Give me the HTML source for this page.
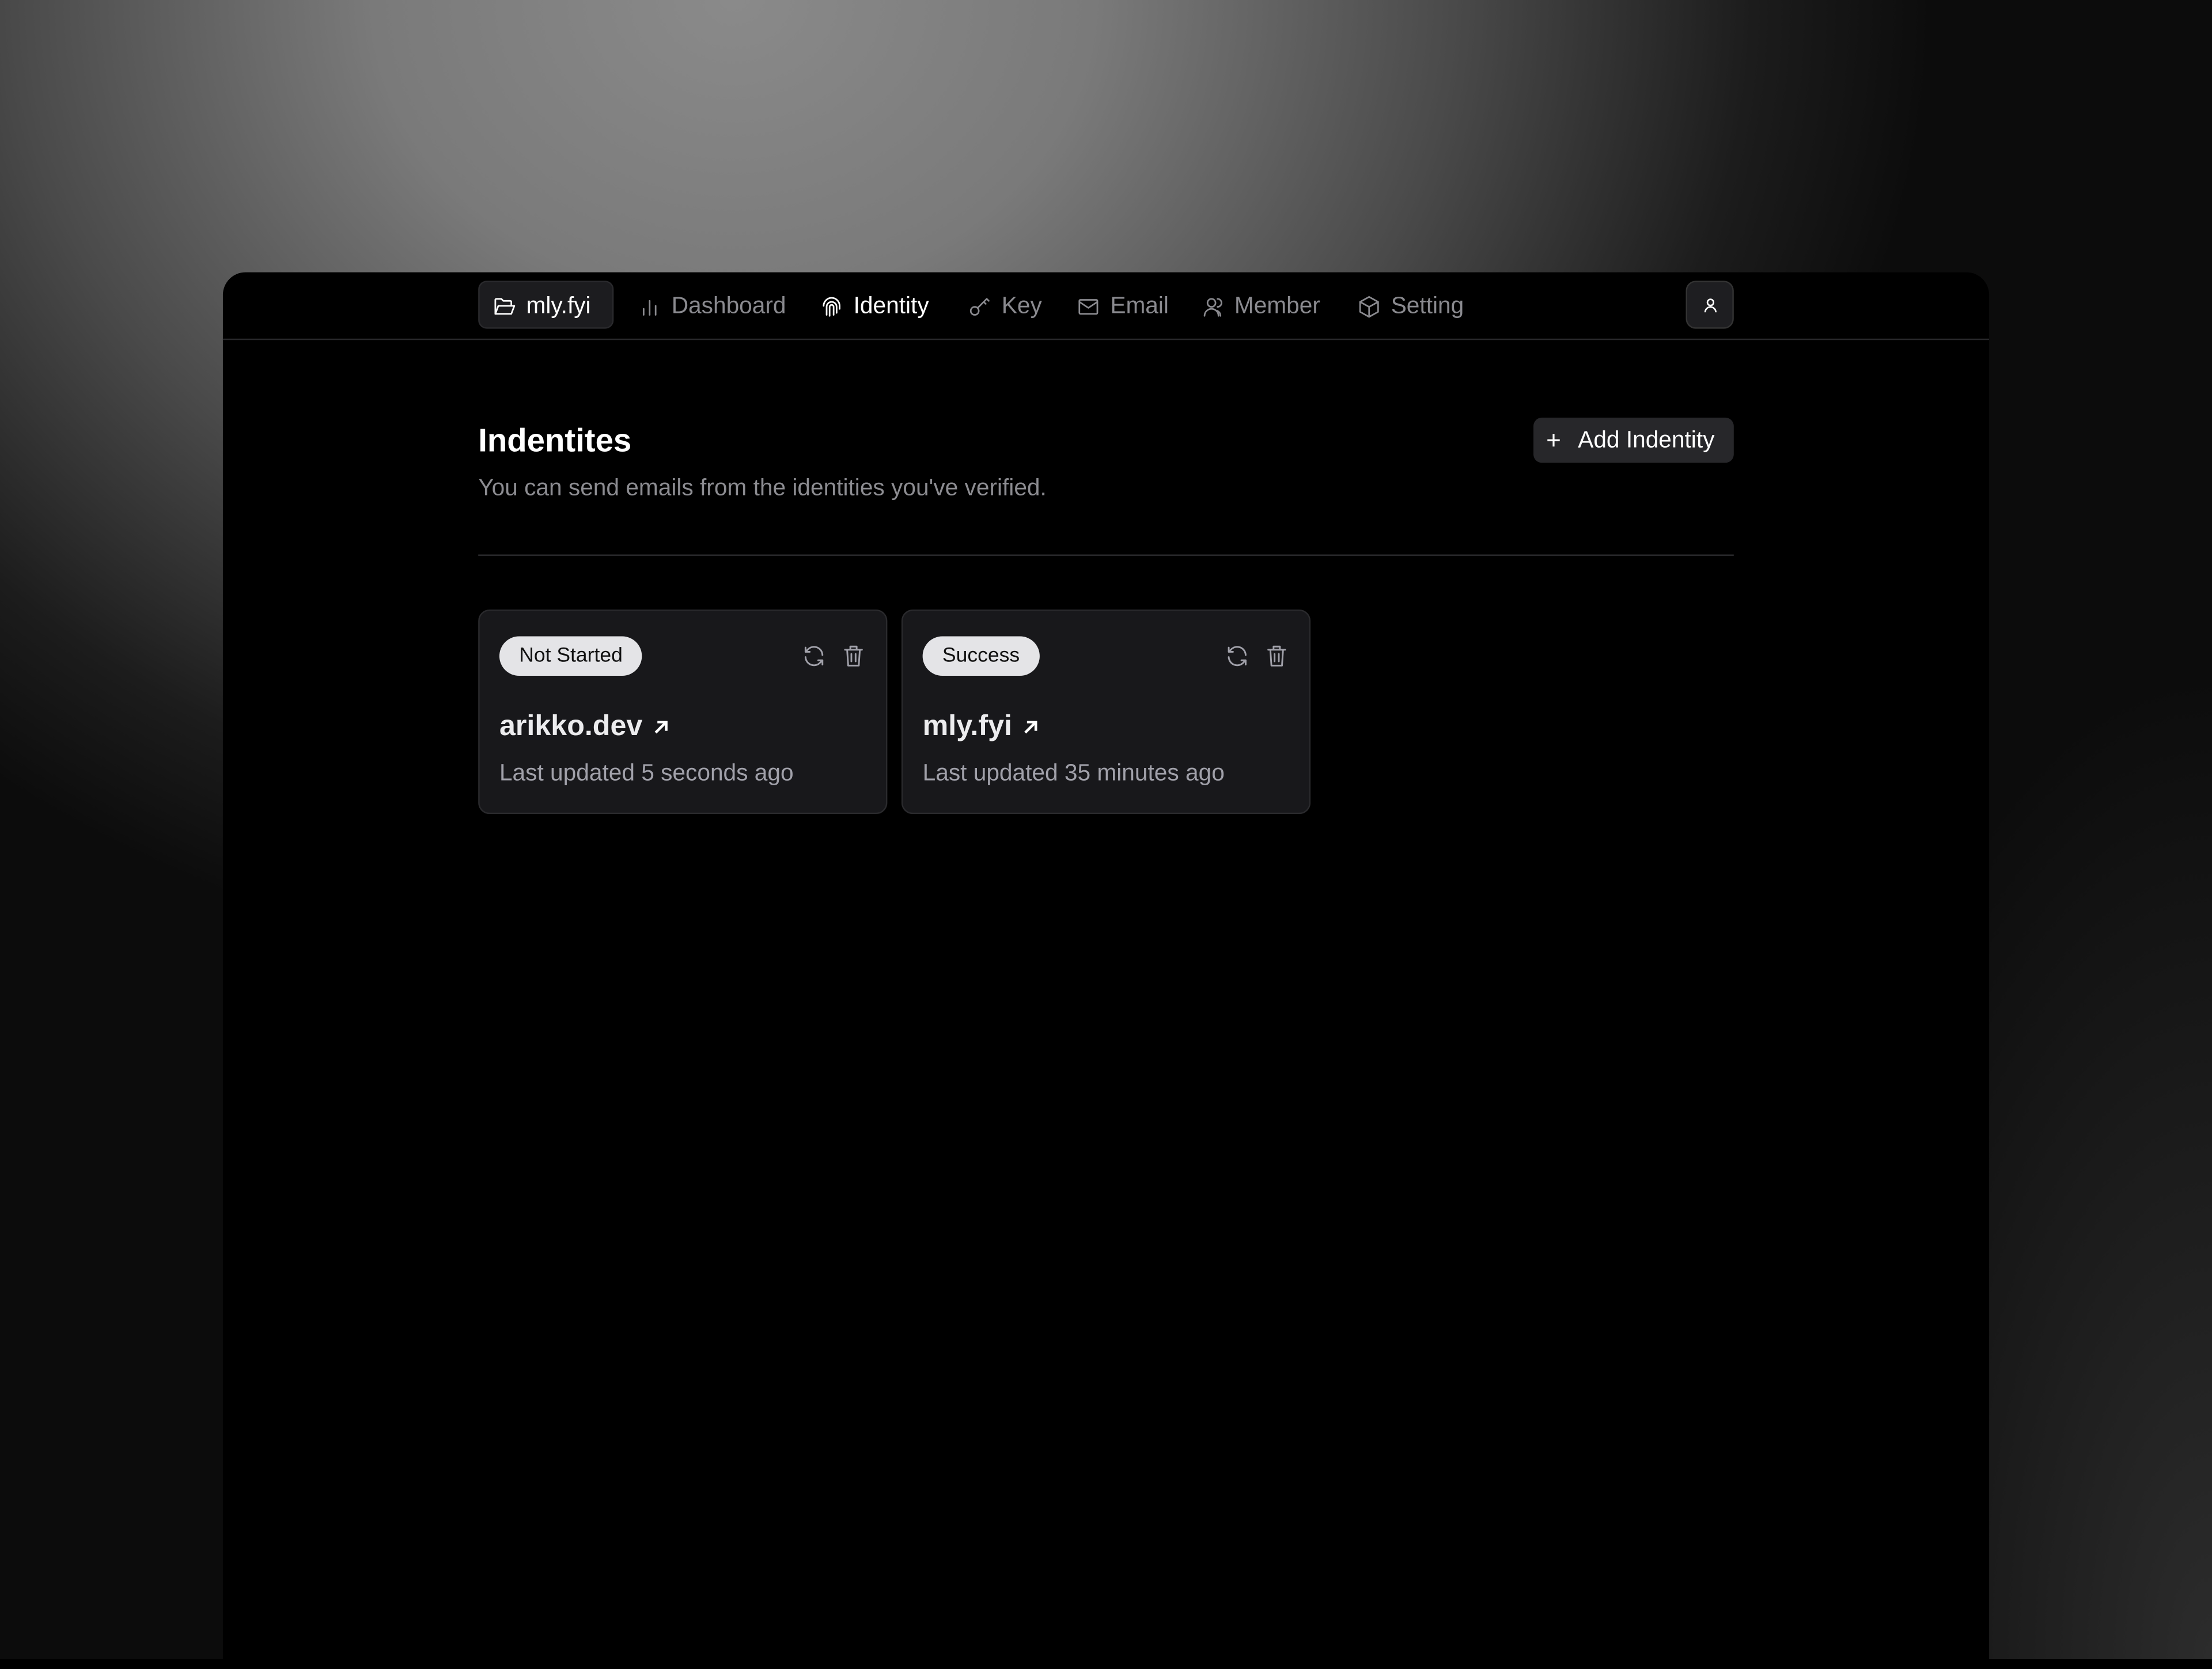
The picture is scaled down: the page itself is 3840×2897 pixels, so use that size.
<!DOCTYPE html>
<html><head><meta charset="utf-8"><style>
html,body{margin:0;padding:0;width:3840px;height:2880px;overflow:hidden;background:#000}
#s{position:absolute;left:0;top:0;width:1568px;height:1176px;transform:scale(2.44898);transform-origin:0 0;font-family:"Liberation Sans",sans-serif;
background:
radial-gradient(ellipse 300px 700px at 1568px 1176px,#2c2c2c 0%,rgba(30,30,30,0) 100%),
radial-gradient(ellipse 850px 700px at 520px 0px,#8a8a8a 0%,#7a7a7a 30%,#4a4a4a 60%,#1c1c1c 85%,#0c0c0c 100%);}
.win{position:absolute;left:158px;top:193px;width:1252px;height:990px;background:#000;border-radius:16px 16px 0 0}
.nav{position:absolute;left:0;top:0;width:1252px;height:47px;border-bottom:1px solid #27272a}
.it{position:absolute;top:13px;height:22px;display:flex;align-items:center;font-size:16.6px;color:#8a8a8f;gap:7px;white-space:nowrap}
.it svg{width:17px;height:17px;fill:none;stroke:currentColor;stroke-width:1.6;stroke-linecap:round;stroke-linejoin:round}
.btn1{position:absolute;left:181px;top:6px;width:96px;height:34px;background:#1c1c1f;border:1px solid #2a2a2d;border-radius:6px;box-sizing:border-box}
.av{position:absolute;left:1037px;top:6px;width:34px;height:34px;background:#1e1e21;border:1px solid #333;border-radius:7px;box-sizing:border-box;display:flex;align-items:center;justify-content:center}
h1{position:absolute;left:181px;top:106px;margin:0;font-size:23px;color:#fff;font-weight:bold}
.sub{position:absolute;left:181px;top:143px;font-size:16.6px;color:#8c8c91}
.add{position:absolute;left:929px;top:103px;width:142px;height:32px;background:#27272a;border-radius:6px;color:#fff;font-size:16.6px;display:flex;align-items:center;box-sizing:border-box;padding-left:9px}
.hr{position:absolute;left:181px;top:200px;width:890px;height:1px;background:#2a2a2d}
.card{position:absolute;top:239px;width:290px;height:145px;background:#18181b;border:1px solid #2a2a2d;border-radius:8px;box-sizing:border-box}
.badge{position:absolute;left:14px;top:18px;height:28px;padding:0 14px;border-radius:14px;background:#e4e4e7;color:#111;font-size:14.5px;line-height:28px;font-weight:500}
.dom{position:absolute;left:14px;top:70px;font-size:20.5px;font-weight:bold;color:#ececee;display:flex;align-items:center;gap:6px}
.upd{position:absolute;left:14px;top:105px;font-size:16.6px;color:#a1a1aa}
.ic{position:absolute;top:23px;width:18px;height:18px;fill:none;stroke:#a1a1aa;stroke-width:1.6;stroke-linecap:round;stroke-linejoin:round}
</style></head><body><div id="s">
<div class="win">
<div class="nav">
<div class="btn1"></div>
<div class="it" style="left:191px;color:#fff"><svg viewBox="0 0 24 24"><path d="M3 19V5a1 1 0 0 1 1-1h5l2 2h7a1 1 0 0 1 1 1v3"/><path d="M3 19l3-8h16l-3 8z"/></svg>mly.fyi</div>
<div class="it" style="left:294px"><svg viewBox="0 0 24 24"><path d="M6 20v-6M12 20V6M18 20v-9"/></svg>Dashboard</div>
<div class="it" style="left:423px;color:#fff"><svg viewBox="0 0 24 24"><path d="M4 11a8 8 0 0 1 16 0v3"/><path d="M7 20v-8a5 5 0 0 1 10 0v6"/><path d="M10 21v-9a2 2 0 0 1 4 0v8"/></svg>Identity</div>
<div class="it" style="left:528px"><svg viewBox="0 0 24 24"><circle cx="7" cy="16" r="4"/><path d="M10 13l9-9M16 7l2 2M19 4l2 2"/></svg>Key</div>
<div class="it" style="left:605px"><svg viewBox="0 0 24 24"><rect x="3" y="5" width="18" height="14" rx="1"/><path d="M3 7l9 6 9-6"/></svg>Email</div>
<div class="it" style="left:693px"><svg viewBox="0 0 24 24"><circle cx="11" cy="8" r="4"/><path d="M4 21a7 7 0 0 1 14 0"/><path d="M17 4a4 4 0 0 1 0 8M20 21a6 6 0 0 0-3-5"/></svg>Member</div>
<div class="it" style="left:804px"><svg viewBox="0 0 24 24"><path d="M12 2l9 5v10l-9 5-9-5V7z"/><path d="M3 7l9 5 9-5M12 12v10"/></svg>Setting</div>
<div class="av"><svg viewBox="0 0 24 24" width="13" height="13" fill="none" stroke="#fff" stroke-width="2"><circle cx="12" cy="8" r="4"/><path d="M5 21a7 7 0 0 1 14 0"/></svg></div>
</div>
<h1>Indentites</h1>
<div class="sub">You can send emails from the identities you've verified.</div>
<div class="add"><span style="font-size:18px;margin-right:12px">+</span>Add Indentity</div>
<div class="hr"></div>
<div class="card" style="left:181px">
<div class="badge">Not Started</div>
<svg class="ic" style="left:228px" viewBox="0 0 24 24"><path d="M20 11a8 8 0 0 0-14-5L4 8M4 4v4h4"/><path d="M4 13a8 8 0 0 0 14 5l2-2M20 20v-4h-4"/></svg>
<svg class="ic" style="left:256px" viewBox="0 0 24 24"><path d="M4 6h16M9 6V3h6v3M6 6l1 15h10l1-15M10 10v7M14 10v7"/></svg>
<div class="dom">arikko.dev <svg viewBox="0 0 24 24" width="15" height="15" fill="none" stroke="#fff" stroke-width="3"><path d="M6 18L18 6M8 6h10v10"/></svg></div>
<div class="upd">Last updated 5 seconds ago</div>
</div>
<div class="card" style="left:481px">
<div class="badge">Success</div>
<svg class="ic" style="left:228px" viewBox="0 0 24 24"><path d="M20 11a8 8 0 0 0-14-5L4 8M4 4v4h4"/><path d="M4 13a8 8 0 0 0 14 5l2-2M20 20v-4h-4"/></svg>
<svg class="ic" style="left:256px" viewBox="0 0 24 24"><path d="M4 6h16M9 6V3h6v3M6 6l1 15h10l1-15M10 10v7M14 10v7"/></svg>
<div class="dom">mly.fyi <svg viewBox="0 0 24 24" width="15" height="15" fill="none" stroke="#fff" stroke-width="3"><path d="M6 18L18 6M8 6h10v10"/></svg></div>
<div class="upd">Last updated 35 minutes ago</div>
</div>
</div>
</div></body></html>
